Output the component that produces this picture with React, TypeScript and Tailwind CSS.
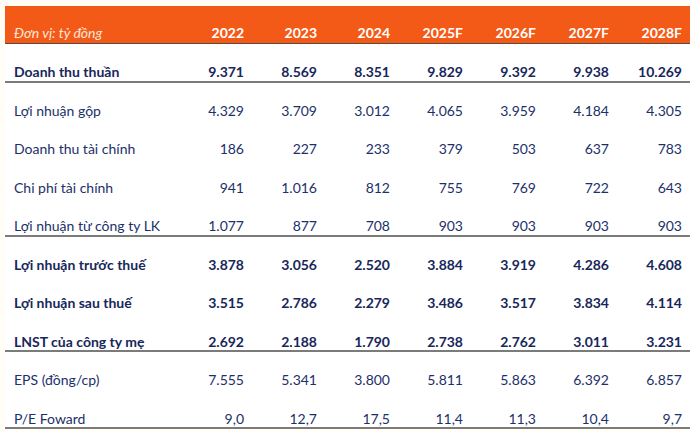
import React from 'react';

const years = ['2022', '2023', '2024', '2025F', '2026F', '2027F', '2028F'];

interface Row {
  label: string;
  values: string[];
  bold?: boolean;
  line?: boolean;
}

const rows: Row[] = [
  { label: 'Doanh thu thuần', values: ['9.371', '8.569', '8.351', '9.829', '9.392', '9.938', '10.269'], bold: true, line: true },
  { label: 'Lợi nhuận gộp', values: ['4.329', '3.709', '3.012', '4.065', '3.959', '4.184', '4.305'] },
  { label: 'Doanh thu tài chính', values: ['186', '227', '233', '379', '503', '637', '783'] },
  { label: 'Chi phí tài chính', values: ['941', '1.016', '812', '755', '769', '722', '643'] },
  { label: 'Lợi nhuận từ công ty LK', values: ['1.077', '877', '708', '903', '903', '903', '903'], line: true },
  { label: 'Lợi nhuận trước thuế', values: ['3.878', '3.056', '2.520', '3.884', '3.919', '4.286', '4.608'], bold: true },
  { label: 'Lợi nhuận sau thuế', values: ['3.515', '2.786', '2.279', '3.486', '3.517', '3.834', '4.114'], bold: true },
  { label: 'LNST của công ty mẹ', values: ['2.692', '2.188', '1.790', '2.738', '2.762', '3.011', '3.231'], bold: true, line: true },
  { label: 'EPS (đồng/cp)', values: ['7.555', '5.341', '3.800', '5.811', '5.863', '6.392', '6.857'] },
  { label: 'P/E Foward', values: ['9,0', '12,7', '17,5', '11,4', '11,3', '10,4', '9,7'], line: true },
];

const grid = 'grid grid-cols-[166px_repeat(7,73px)] pr-[9px]';

export default function App() {
  return (
    <div
      className="w-[690px] h-[432px] bg-[#fffdf6] pl-[5px] pt-[6px] overflow-hidden"
      style={{ fontFamily: 'Lato, "Noto Sans", sans-serif' }}
    >
      <div className="bg-white">
        <div className={`${grid} h-[38px] pt-[17px] bg-[#f45a17] border-b-[1.5px] border-[#5a4a44] leading-[20px] text-[14px]`}>
          <div className="pl-[9px] italic text-[#fde6da]">Đơn vị: tỷ đồng</div>
          {years.map((y) => (
            <div key={y} className="text-right font-bold text-white">{y}</div>
          ))}
        </div>

        {rows.map((row) => (
          <div
            key={row.label}
            className={`${grid} h-[38.5px] pt-[18px] leading-[20px] text-[14px] ${
              row.bold ? 'font-bold text-[#18275a]' : 'text-[#1c3069]'
            } ${row.line ? 'border-b-2 border-[#7b7b7b]' : ''}`}
          >
            <div className="pl-[9px] whitespace-nowrap">{row.label}</div>
            {row.values.map((v, i) => (
              <div key={i} className="text-right">{v}</div>
            ))}
          </div>
        ))}
      </div>
    </div>
  );
}
